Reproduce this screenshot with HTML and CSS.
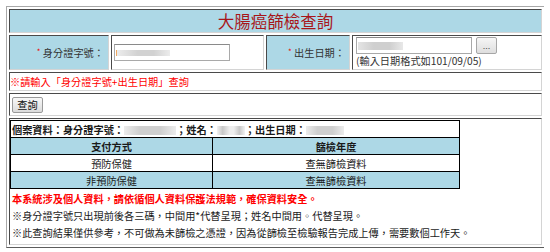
FILE: index.html
```html
<!DOCTYPE html>
<html lang="zh-TW">
<head>
  <meta charset="UTF-8">
  <title>大腸癌篩檢查詢</title>
  <link rel="stylesheet" href="styles.css">
</head>
<body>
  <table class="frame">
    <tr>
      <td colspan="4" class="title">大腸癌篩檢查詢</td>
    </tr>
    <tr class="inputs">
      <td class="label label-id"><span class="req">*</span> 身分證字號：</td>
      <td class="field field-id"><input type="text" class="textbox textbox-id"></td>
      <td class="label label-birth"><span class="req">*</span> 出生日期：</td>
      <td class="field field-birth">
        <div class="date-line">
          <input type="text" class="textbox textbox-birth">
          <button class="pick">...</button>
        </div>
        <div class="date-tip">(輸入日期格式如101/09/05)</div>
      </td>
    </tr>
    <tr>
      <td colspan="4" class="notice">※請輸入「身分證字號+出生日期」查詢</td>
    </tr>
    <tr>
      <td colspan="4" class="actions"><button class="query">查詢</button></td>
    </tr>
    <tr>
      <td colspan="4" class="result">
        <table class="records">
          <tr>
            <td colspan="2" class="case">個案資料：身分證字號：<span class="blur blur-id"></span>；姓名：<span class="blur blur-name"></span>；出生日期：<span class="blur blur-birth"></span></td>
          </tr>
          <tr class="head">
            <td class="col-pay">支付方式</td>
            <td class="col-year">篩檢年度</td>
          </tr>
          <tr>
            <td>預防保健</td>
            <td>查無篩檢資料</td>
          </tr>
          <tr class="alt">
            <td>非預防保健</td>
            <td>查無篩檢資料</td>
          </tr>
        </table>
        <div class="notes">
          <p class="warn">本系統涉及個人資料，請依循個人資料保護法規範，確保資料安全。</p>
          <p>※身分證字號只出現前後各三碼，中間用*代替呈現；姓名中間用◦代替呈現。</p>
          <p>※此查詢結果僅供參考，不可做為未篩檢之憑證，因為從篩檢至檢驗報告完成上傳，需要數個工作天。</p>
        </div>
      </td>
    </tr>
  </table>
</body>
</html>
```

FILE: styles.css
```css
body {
  margin: 6px;
  font-family: "Noto Sans CJK TC", "Liberation Sans", sans-serif;
  font-size: 10.2px;
  color: #1a1a1a;
  background: #fff;
}
.frame {
  width: 539px;
  border: 1px solid;
  border-color: #a8a8a8 #5c5c5c #5c5c5c #a8a8a8;
  border-spacing: 2px;
}
.frame td {
  box-sizing: border-box;
}
.frame > tbody > tr > td {
  border: 1px solid;
  border-color: #4a4a4a #d4d4d4 #d4d4d4 #4a4a4a;
  padding: 0;
}
.title {
  height: 24px;
  background: #add8e6;
  color: #a8161a;
  font-size: 16.5px;
  text-align: center;
  line-height: 20px;
}
.inputs td {
  height: 35px;
}
.label {
  background: #add8e6;
  text-align: right;
  padding-right: 4px !important;
  color: #333;
}
.label-id {
  width: 100px;
}
.field-id {
  width: 153px;
}
.label-birth {
  width: 84px;
}
.field-birth {
  width: 190px;
}
.req {
  color: #e00;
  font-size: 8px;
  vertical-align: 2px;
}
.textbox {
  box-sizing: border-box;
  height: 17px;
  width: 116px;
  margin: 0;
  padding: 0;
  border: 1px solid #a9a9a9;
  border-top-color: #8a8a8a;
  background-color: #fff;
  background-repeat: no-repeat;
  vertical-align: middle;
}
.textbox-id {
  margin-left: 2px;
  background-image: linear-gradient(90deg, #f0a860 0, #f0a860 1px, #ececec 1px, #d2d2d2 40%, #d2d2d2 70%, #ececec 100%);
  background-size: 54px 6px;
  background-position: 1px center;
}
.textbox-birth {
  background-image: linear-gradient(90deg, #e4e4e4, #cfcfcf 35%, #cfcfcf 70%, #e8e8e8);
  background-size: 45px 8px;
  background-position: 1px center;
}
.field-birth {
  padding: 1px 0 0 3px !important;
  vertical-align: top;
}
.date-line {
  display: flex;
  align-items: center;
  gap: 4px;
}
.pick {
  box-sizing: border-box;
  width: 21px;
  height: 17px;
  padding: 0;
  border: 1px solid #a6a6a6;
  border-radius: 2px;
  background: linear-gradient(#f6f6f6, #dedede);
  font-family: "Liberation Sans", sans-serif;
  font-size: 9px;
  color: #444;
}
.date-tip {
  line-height: 12px;
  margin-top: 1px;
  color: #333;
}
.notice {
  height: 19px;
  color: #f00;
  line-height: 16px;
}
.actions {
  height: 23px;
}
.query {
  box-sizing: border-box;
  margin-left: 2px;
  width: 31px;
  height: 16px;
  padding: 0;
  border: 1px solid #9a9a9a;
  border-radius: 2px;
  background: linear-gradient(#f8f8f8, #dcdcdc);
  font-family: inherit;
  font-size: 10.2px;
  line-height: 14px;
  color: #111;
  vertical-align: middle;
}
.result {
  height: 127px;
  vertical-align: top;
  padding-top: 1px !important;
}
.records {
  width: 450px;
  border-collapse: collapse;
  border: 1px solid #000;
}
.records td {
  border: 1px solid #000;
  height: 17px;
  padding: 0 1px;
  text-align: center;
  line-height: 15px;
}
.records .case {
  text-align: left;
  font-weight: bold;
}
.records .head td {
  background: #add8e6;
  font-weight: bold;
}
.records .alt td {
  background: #add8e6;
}
.col-pay {
  width: 202px;
}
.blur {
  display: inline-block;
  height: 9px;
  vertical-align: -1px;
  background: linear-gradient(90deg, #ececec, #cfcfcf 30%, #cfcfcf 70%, #ececec);
}
.blur-id {
  width: 52px;
}
.blur-name {
  width: 28px;
  background: linear-gradient(90deg, #f2f2f2, #c8c8c8 20%, #eeeeee 45%, #eeeeee 60%, #c8c8c8 80%, #f2f2f2);
}
.blur-birth {
  width: 38px;
}
.notes {
  padding: 1px 0 0 2px;
}
.notes p {
  margin: 0;
  line-height: 17px;
}
.notes .warn {
  color: #f00;
  font-weight: bold;
}
```
